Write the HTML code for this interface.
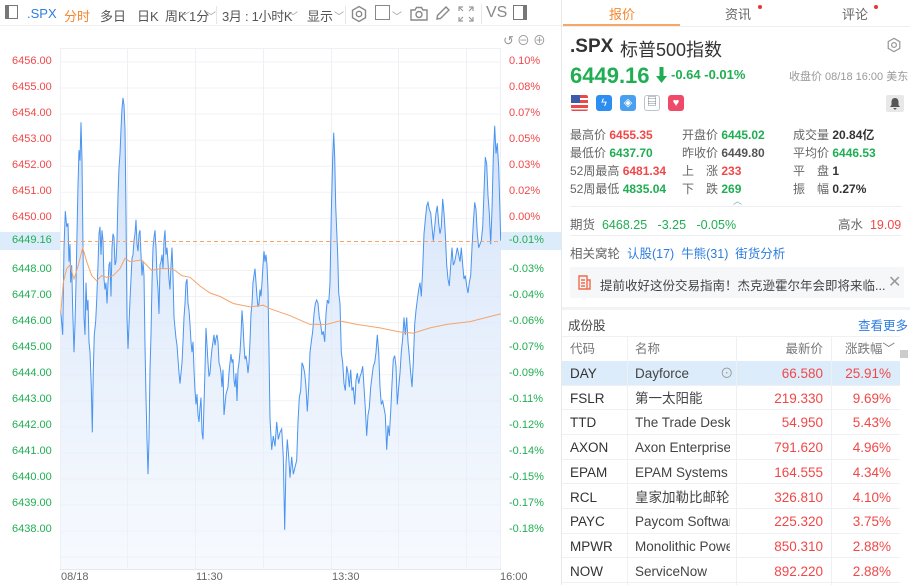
<!DOCTYPE html>
<html><head><meta charset="utf-8">
<style>
*{margin:0;padding:0;box-sizing:border-box}
body{width:910px;height:585px;overflow:hidden;background:#fff;font-family:"Liberation Sans","Noto Sans CJK SC",sans-serif;position:relative;color:#333}
.a{position:absolute;white-space:nowrap}
.tb{font-size:13px;color:#555;top:6px}
.cv{font-size:10px;color:#999;top:8px}
.r{color:#f04848}.g{color:#1fae52}.b{color:#2e7de0}.gr{color:#666}
.yl{font-size:11px;left:12px}
.yr{font-size:11px;left:509px}
.lab{font-size:12px;color:#666}
.row{position:absolute;left:562px;width:338px;height:24.6px;font-size:13.5px;border-bottom:1px solid #eef0f3}
.row span{position:absolute;top:4px;white-space:nowrap;line-height:17px;height:17px}
</style></head><body>
<!-- toolbar -->
<div class="a" style="left:5px;top:5px;width:13px;height:14px;border:1.5px solid #777;border-left-width:4px"></div>
<div class="a tb b" style="left:27px">.SPX</div>
<div class="a tb" style="left:64px;color:#f7862b">分时</div>
<div class="a tb" style="left:100px">多日</div>
<div class="a tb" style="left:137px">日K</div>
<div class="a tb" style="left:165px">周K</div>
<div class="a cv" style="left:180px">﹀</div>
<div class="a tb" style="left:189px">1分</div>
<div class="a cv" style="left:206px">﹀</div>
<div class="a" style="left:216px;top:6px;width:1px;height:18px;background:#e6e6e6"></div>
<div class="a tb" style="left:222px;letter-spacing:-0.3px">3月 : 1小时K</div>
<div class="a cv" style="left:288px">﹀</div>
<div class="a tb" style="left:307px">显示</div>
<div class="a cv" style="left:334px">﹀</div>
<div class="a" style="left:345px;top:6px;width:1px;height:18px;background:#e6e6e6"></div>
<svg class="a" style="left:350px;top:5px" width="18" height="18" viewBox="0 0 18 18" fill="none" stroke="#888" stroke-width="1.4"><path d="M9 1.5l6.5 3.75v7.5L9 16.5 2.5 12.75v-7.5z"/><circle cx="9" cy="9" r="2.7"/></svg>
<div class="a" style="left:375px;top:5px;width:15px;height:15px;border:1.5px solid #888"></div>
<div class="a cv" style="left:392px">﹀</div>
<svg class="a" style="left:410px;top:6px" width="18" height="15" viewBox="0 0 18 15" fill="none" stroke="#888" stroke-width="1.4"><path d="M1 4h4l1.5-2.5h5L13 4h4v10H1z"/><circle cx="9" cy="8.5" r="3"/></svg>
<svg class="a" style="left:435px;top:5px" width="16" height="16" viewBox="0 0 16 16" fill="none" stroke="#888" stroke-width="1.4"><path d="M11 2l3 3-8.5 8.5L2 14l.5-3.5z"/></svg>
<svg class="a" style="left:458px;top:6px" width="16" height="16" viewBox="0 0 16 16" fill="none" stroke="#999" stroke-width="1.2"><path d="M1 5V1h4M11 1h4v4M15 11v4h-4M5 15H1v-4M1 1l4 4M15 1l-4 4M15 15l-4-4M1 15l4-4"/></svg>
<div class="a" style="left:481px;top:4px;width:1px;height:20px;background:#e6e6e6"></div>
<div class="a tb" style="left:486px;font-size:16px;top:4px;color:#888">VS</div>
<div class="a" style="left:513px;top:5px;width:14px;height:15px;border:1.5px solid #777;border-right-width:4px"></div>
<div class="a" style="left:0;top:25px;width:561px;height:1px;background:#f0f0f0"></div>
<div class="a" style="left:503px;top:30px;font-size:13px;color:#999;letter-spacing:3px">↺⊖⊕</div>
<!-- chart -->
<svg class="a" style="left:0;top:0" width="561" height="585" id="ch"></svg>
<div class="a yl r" style="top:55px">6456.00</div>
<div class="a yl r" style="top:81px">6455.00</div>
<div class="a yl r" style="top:107px">6454.00</div>
<div class="a yl r" style="top:133px">6453.00</div>
<div class="a yl r" style="top:159px">6452.00</div>
<div class="a yl r" style="top:185px">6451.00</div>
<div class="a yl r" style="top:211px">6450.00</div>
<div class="a" style="left:0;top:232px;width:60px;height:18px;background:#dcecfb"></div>
<div class="a yl g" style="top:234px">6449.16</div>
<div class="a yl g" style="top:263px">6448.00</div>
<div class="a yl g" style="top:289px">6447.00</div>
<div class="a yl g" style="top:315px">6446.00</div>
<div class="a yl g" style="top:341px">6445.00</div>
<div class="a yl g" style="top:367px">6444.00</div>
<div class="a yl g" style="top:393px">6443.00</div>
<div class="a yl g" style="top:419px">6442.00</div>
<div class="a yl g" style="top:445px">6441.00</div>
<div class="a yl g" style="top:471px">6440.00</div>
<div class="a yl g" style="top:497px">6439.00</div>
<div class="a yl g" style="top:523px">6438.00</div>
<div class="a yr r" style="top:55px">0.10%</div>
<div class="a yr r" style="top:81px">0.08%</div>
<div class="a yr r" style="top:107px">0.07%</div>
<div class="a yr r" style="top:133px">0.05%</div>
<div class="a yr r" style="top:159px">0.03%</div>
<div class="a yr r" style="top:185px">0.02%</div>
<div class="a yr r" style="top:211px">0.00%</div>
<div class="a" style="left:501px;top:232px;width:60px;height:18px;background:#dcecfb"></div>
<div class="a yr g" style="top:234px">-0.01%</div>
<div class="a yr g" style="top:263px">-0.03%</div>
<div class="a yr g" style="top:289px">-0.04%</div>
<div class="a yr g" style="top:315px">-0.06%</div>
<div class="a yr g" style="top:341px">-0.07%</div>
<div class="a yr g" style="top:367px">-0.09%</div>
<div class="a yr g" style="top:393px">-0.11%</div>
<div class="a yr g" style="top:419px">-0.12%</div>
<div class="a yr g" style="top:445px">-0.14%</div>
<div class="a yr g" style="top:471px">-0.15%</div>
<div class="a yr g" style="top:497px">-0.17%</div>
<div class="a yr g" style="top:523px">-0.18%</div>
<div class="a" style="left:61px;top:571px;font-size:11px;color:#666">08/18</div>
<div class="a" style="left:196px;top:571px;font-size:11px;color:#666">11:30</div>
<div class="a" style="left:332px;top:571px;font-size:11px;color:#666">13:30</div>
<div class="a" style="left:500px;top:571px;font-size:11px;color:#666">16:00</div>
<div class="a" style="left:561px;top:0;width:1px;height:585px;background:#e8e8e8"></div>
<!-- right panel -->
<div class="a" style="left:609px;top:4px;font-size:13px;color:#f7862b">报价</div>
<div class="a" style="left:725px;top:4px;font-size:13px;color:#666">资讯</div>
<div class="a" style="left:758px;top:5px;width:4px;height:4px;border-radius:2px;background:#e33"></div>
<div class="a" style="left:842px;top:4px;font-size:13px;color:#666">评论</div>
<div class="a" style="left:874px;top:5px;width:4px;height:4px;border-radius:2px;background:#e33"></div>
<div class="a" style="left:563px;top:24px;width:117px;height:2px;background:#f7a868"></div>
<div class="a" style="left:562px;top:26px;width:348px;height:1px;background:#eee"></div>
<div class="a" style="left:570px;top:36px;font-size:19px;font-weight:bold;color:#333">.SPX</div>
<div class="a" style="left:620px;top:36px;font-size:18px;color:#333">标普500指数</div>
<svg class="a" style="left:886px;top:37px" width="16" height="16" viewBox="0 0 18 18" fill="none" stroke="#999" stroke-width="1.4"><path d="M9 1.5l6.5 3.75v7.5L9 16.5 2.5 12.75v-7.5z"/><circle cx="9" cy="9" r="2.7"/></svg>
<div class="a g" style="left:570px;top:63px;font-size:22px;font-weight:bold">6449.16</div>
<svg class="a" style="left:655px;top:66px" width="13" height="18" viewBox="0 0 13 18"><path d="M4.5 1h4v9h3.5L6.5 17 1 10h3.5z" fill="#1fae52"/></svg>
<div class="a g" style="left:671px;top:67px;font-size:13px;font-weight:bold">-0.64 -0.01%</div>
<div class="a" style="left:789px;top:68px;font-size:11px;color:#999">收盘价 08/18 16:00 美东</div>
<svg class="a" style="left:571px;top:95px" width="17" height="16"><rect width="17" height="16" rx="2" fill="#e84a4a"/><rect y="3" width="17" height="2" fill="#fff"/><rect y="8" width="17" height="2" fill="#fff"/><rect y="13" width="17" height="1.5" fill="#fff"/><rect width="9" height="8" fill="#3c5ba8"/></svg>
<div class="a" style="left:596px;top:95px;width:16px;height:16px;border-radius:3px;background:#2b8ef0;color:#fff;font-size:11px;text-align:center;line-height:16px">ϟ</div>
<div class="a" style="left:620px;top:95px;width:16px;height:16px;border-radius:3px;background:#4aa0f0;color:#fff;font-size:11px;text-align:center;line-height:16px">◈</div>
<div class="a" style="left:644px;top:95px;width:16px;height:16px;border-radius:3px;border:1px solid #bcc4d0;color:#567;font-size:10px;text-align:center;line-height:14px">▤</div>
<div class="a" style="left:668px;top:95px;width:16px;height:16px;border-radius:3px;background:#f04a6a;color:#fff;font-size:11px;text-align:center;line-height:16px">♥</div>
<div class="a" style="left:886px;top:95px;width:18px;height:17px;border-radius:2px;background:#e8e8e8"></div>
<svg class="a" style="left:889px;top:97px" width="12" height="13" viewBox="0 0 12 13"><path d="M6 1C3.5 1 2.5 3 2.5 5v3L1 10h10L9.5 8V5C9.5 3 8.5 1 6 1z M4.5 11a1.5 1.5 0 003 0z" fill="#555"/></svg>
<div class="a lab" style="left:570px;top:126px">最高价 <b class="r">6455.35</b></div>
<div class="a lab" style="left:682px;top:126px">开盘价 <b class="g">6445.02</b></div>
<div class="a lab" style="left:793px;top:126px">成交量 <b style="color:#333">20.84亿</b></div>
<div class="a lab" style="left:570px;top:144px">最低价 <b class="g">6437.70</b></div>
<div class="a lab" style="left:682px;top:144px">昨收价 <b style="color:#555">6449.80</b></div>
<div class="a lab" style="left:793px;top:144px">平均价 <b class="g">6446.53</b></div>
<div class="a lab" style="left:570px;top:162px">52周最高 <b class="r">6481.34</b></div>
<div class="a lab" style="left:682px;top:162px">上　涨 <b class="r">233</b></div>
<div class="a lab" style="left:793px;top:162px">平　盘 <b style="color:#333">1</b></div>
<div class="a lab" style="left:570px;top:180px">52周最低 <b class="g">4835.04</b></div>
<div class="a lab" style="left:682px;top:180px">下　跌 <b class="g">269</b></div>
<div class="a lab" style="left:793px;top:180px">振　幅 <b style="color:#333">0.27%</b></div>
<div class="a" style="left:733px;top:194px;font-size:9px;color:#8aa">︿</div>
<div class="a" style="left:570px;top:206px;width:332px;height:1px;background:#eee"></div>
<div class="a lab" style="left:570px;top:214px;font-size:12.5px">期货 <span class="g">&nbsp;6468.25 &nbsp; -3.25 &nbsp; -0.05%</span></div>
<div class="a lab" style="left:838px;top:214px;font-size:12.5px">高水 &nbsp;<span class="r">19.09</span></div>
<div class="a" style="left:570px;top:235px;width:332px;height:1px;background:#eee"></div>
<div class="a lab" style="left:570px;top:243px;font-size:12.5px">相关窝轮 <span class="b">&nbsp;认股(17) &nbsp;牛熊(31) &nbsp;街货分析</span></div>
<div class="a" style="left:570px;top:267px;width:334px;height:31px;background:#f6f7f9;border-radius:2px"></div>
<svg class="a" style="left:578px;top:275px" width="13" height="15" viewBox="0 0 13 15" fill="none" stroke="#f06a4a" stroke-width="1.4"><path d="M1 1h8v13H1zM9 5h3v9H9M3 5h4M3 8h4M3 11h4"/></svg>
<div class="a" style="left:600px;top:275px;font-size:12.5px;color:#444">提前收好这份交易指南！杰克逊霍尔年会即将来临...</div>
<div class="a" style="left:888px;top:272px;font-size:16px;color:#999">✕</div>
<div class="a" style="left:562px;top:307px;width:348px;height:3px;background:#f2f3f5"></div>
<div class="a" style="left:568px;top:315px;font-size:12.5px;color:#444">成份股</div>
<div class="a b" style="left:858px;top:315px;font-size:12.5px">查看更多</div>
<div class="a" style="left:562px;top:336px;width:338px;height:1px;background:#eef0f3"></div>
<div class="row" style="top:337px;color:#777;font-size:12.5px"><span style="left:8px">代码</span><span style="left:73px">名称</span><span style="right:77px">最新价</span><span style="right:5px">涨跌幅﹀</span></div>
<div class="a" style="left:900px;top:350px;width:8px;height:8px;background:#ccc"></div>
<div id="rows"></div>
<script>
var data=[["DAY","Dayforce","66.580","25.91%"],["FSLR","第一太阳能","219.330","9.69%"],["TTD","The Trade Desk","54.950","5.43%"],["AXON","Axon Enterprise","791.620","4.96%"],["EPAM","EPAM Systems","164.555","4.34%"],["RCL","皇家加勒比邮轮","326.810","4.10%"],["PAYC","Paycom Software","225.320","3.75%"],["MPWR","Monolithic Power","850.310","2.88%"],["NOW","ServiceNow","892.220","2.88%"]];
var h="";
data.forEach(function(d,i){h+='<div class="row" style="top:'+(361+i*24.7)+'px;'+(i==0?'background:#dcecfb':'')+'"><span style="left:8px;color:#333">'+d[0]+'</span><span style="left:73px;width:95px;overflow:hidden;color:#444">'+d[1]+'</span>'+(i==0?'<span style="left:158px;color:#999">⊙</span>':'')+'<span style="right:77px;color:#f04848">'+d[2]+'</span><span style="right:9px;color:#f04848">'+d[3]+'</span></div>';});
h+='<div class="a" style="left:627px;top:337px;width:1px;height:248px;background:#eef0f3"></div><div class="a" style="left:736px;top:337px;width:1px;height:248px;background:#eef0f3"></div><div class="a" style="left:831px;top:337px;width:1px;height:248px;background:#eef0f3"></div>';
document.getElementById("rows").innerHTML=h;

var p1=[[182,780],[188,850],[192,600],[196,495],[200,540],[204,530],[207,640],[210,590],[212,700],[215,650],[218,780],[222,900],[225,820],[228,700],[231,560],[234,420],[237,320],[240,350],[243,240],[246,350],[249,600],[252,800],[255,850],[258,700],[261,780],[264,750],[267,870],[270,900],[274,1000],[277,1130],[280,950],[283,850],[287,810],[290,750],[294,650],[297,560],[300,540],[303,620],[306,550],[309,580],[312,690],[315,720],[318,700],[321,760],[324,700],[327,650],[330,640],[333,740],[336,600],[339,560],[342,570],[345,650],[348,640],[351,580],[354,450],[357,370],[360,330],[363,260],[366,200],[369,170],[372,190],[375,260],[378,500],[381,800],[384,890],[387,820],[390,750],[393,690],[396,630],[399,620],[402,580],[405,560],[408,520],[411,590],[414,610],[417,560],[420,550],[423,620],[426,680],[429,640],[432,680],[435,880],[438,1030],[441,1150],[444,1250],[447,1150],[450,950],[453,850],[456,700],[459,600],[462,570],[465,550],[468,600],[471,680],[474,720],[477,790],[480,650],[483,640],[486,620],[489,660],[492,580],[495,550],[498,620],[501,600],[504,640],[507,690],[510,720],[513,650],[516,600],[519,680],[522,800],[525,830],[528,860],[531,880],[534,920],[537,960],[540,990],[543,960],[546,930],[549,870],[552,800],[555,760],[558,700],[561,690],[564,760],[567,780],[570,820],[573,870],[576,900],[579,870],[582,950],[585,1010],[588,1050],[591,1020],[594,1080],[597,1100],[600,1060],[603,1030],[606,1130],[609,1150],[612,1050],[615,950],[618,830],[621,880],[624,930],[627,970],[630,960],[633,920],[636,890],[639,870],[642,850],[645,880],[648,860],[651,850],[654,870],[657,930],[660,940],[663,960],[666,1000],[669,950],[672,1080],[675,1050],[678,1020],[681,1010],[684,1000],[687,960],[690,930],[693,905],[696,930],[699,920],[702,980],[705,1000],[708,960],[711,1040],[714,950],[717,930],[720,900],[723,850],[726,780],[729,820],[732,880],[735,920],[738,910],[741,930],[744,960],[747,930],[750,870],[753,790],[756,760],[759,700],[762,680],[765,660],[768,700],[771,740],[774,770],[777,760],[780,720],[783,740],[786,700],[789,650],[792,610],[795,640],[798,620],[801,650],[804,720],[807,900]];
var p2=[[0,1090],[5,1180],[10,1140],[15,1170],[20,1100],[25,1150],[30,1130],[35,1120],[40,1200],[44,1410],[48,1220],[52,1150],[56,1200],[60,1260],[65,1200],[70,1250],[75,1230],[80,1210],[84,1100],[88,1030],[92,1010],[96,930],[100,940],[104,960],[108,1000],[112,1070],[116,1000],[120,900],[124,870],[128,840],[132,790],[136,760],[140,750],[144,760],[148,800],[152,820],[156,850],[160,840],[164,870],[168,790],[172,750],[176,760],[180,700],[184,500],[188,340],[191,270],[194,340],[197,480],[200,550],[203,620],[206,730],[210,760],[214,900],[218,930],[222,990],[226,1010],[230,940],[234,960],[238,1000],[242,950],[246,1010],[250,1000],[254,1050],[258,980],[262,960],[266,990],[270,970],[274,960],[278,940],[282,1000],[286,1060],[290,1140],[294,1080],[298,1060],[302,1000],[306,970],[310,940],[314,930],[318,900],[322,850],[326,900],[330,1000],[334,1050],[338,1040],[342,1060],[346,1080],[350,1180],[354,1110],[358,1140],[362,1070],[366,990],[370,920],[374,910],[378,940],[382,1050],[386,1000],[390,960],[394,900],[398,860],[402,800],[406,850],[410,800],[414,870],[418,910],[422,960],[426,1000],[430,930],[434,820],[438,780],[442,750],[446,720],[450,700],[454,740],[458,660],[462,560],[466,520],[470,480],[474,470],[478,490],[482,500],[486,540],[490,580],[494,540],[498,500],[502,480],[506,530],[510,560],[514,540],[518,460],[522,500],[526,560],[530,650],[534,690],[538,710],[542,650],[546,600],[550,650],[554,640],[558,620],[562,600],[566,620],[570,640],[574,600],[578,650],[582,690],[586,680],[590,710],[594,730],[598,700],[602,680],[606,600],[610,530],[614,470],[618,490],[622,560],[626,600],[630,590],[634,580],[638,540],[642,440],[646,340],[650,360],[654,450],[658,500],[662,590],[666,490],[670,340],[674,250],[678,330],[682,300],[686,370],[690,500],[692,580]];
var a1=[[182,790],[190,700],[200,660],[210,650],[222,690],[235,650],[248,600],[260,640],[275,680],[290,695],[305,680],[320,685],[340,680],[360,660],[375,630],[390,640],[425,635],[455,665],[480,660],[510,660],[525,665],[545,680],[570,685],[600,710],[630,730],[660,740],[700,760],[750,770],[790,765],[810,775]];
var a2=[[60,795],[120,820],[170,820],[210,810],[260,820],[330,830],[390,842],[430,845],[480,830],[530,820],[600,812],[650,800],[692,790]];
function T(x,y){return [(x/3).toFixed(1),(62+(y-67)/2.87).toFixed(1)];}
var pts=p1.map(function(p){return T(p[0],p[1])}).concat(p2.map(function(p){return T(p[0]+810,p[1])}));
var av=a1.map(function(p){return T(p[0],p[1])}).concat(a2.map(function(p){return T(p[0]+810,p[1])}));
var s='<defs><linearGradient id="gf" x1="0" y1="0" x2="0" y2="1"><stop offset="0" stop-color="#c9dcf8" stop-opacity=".9"/><stop offset="1" stop-color="#eef4fd" stop-opacity=".5"/></linearGradient></defs>';
for(var i=0;i<20;i++){var y=62+i*26.06;s+='<line x1="60" x2="500" y1="'+y+'" y2="'+y+'" stroke="#f0f2f5"/>';}
s+='<line x1="60" x2="500" y1="48.5" y2="48.5" stroke="#eef0f3"/>';
[60.5,127.5,195.5,263.5,331.5,398.5,466.5,500.5].forEach(function(x){s+='<line x1="'+x+'" x2="'+x+'" y1="48" y2="569" stroke="#eef0f3"/>';});
s+='<line x1="60" x2="501" y1="569.5" y2="569.5" stroke="#e6e8eb"/>';
var d="M"+pts.join(" L");
s+='<path d="'+d+' L'+pts[pts.length-1][0]+',569 L'+pts[0][0]+',569 Z" fill="url(#gf)"/>';
s+='<path d="'+d+'" fill="none" stroke="#4a94f0" stroke-width="1"/>';
s+='<path d="M'+av.join(" L")+'" fill="none" stroke="#f5a46a" stroke-width="1"/>';
s+='<line x1="60" x2="500" y1="241.5" y2="241.5" stroke="#f5a46a" stroke-dasharray="4,3"/>';
document.getElementById("ch").innerHTML=s;
</script>
</body></html>
